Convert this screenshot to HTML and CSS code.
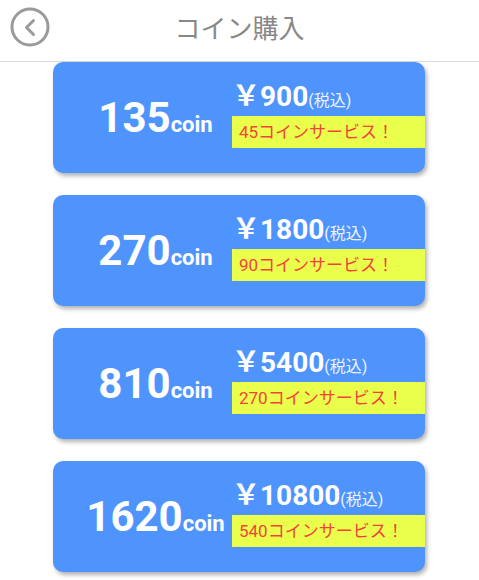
FILE: index.html
```html
<!DOCTYPE html>
<html lang="ja">
<head>
<meta charset="utf-8">
<title>コイン購入</title>
<link rel="stylesheet" href="styles.css">
</head>
<body>
<header class="header">
  <div class="back">
    <svg width="40" height="40" viewBox="0 0 40 40">
      <circle cx="20" cy="20" r="18" fill="none" stroke="#9a9a9a" stroke-width="3"/>
      <path d="M23.5 13.5 L16.5 20.5 L23.5 27.5" fill="none" stroke="#9a9a9a" stroke-width="3" stroke-linecap="round" stroke-linejoin="round"/>
    </svg>
  </div>
  <h1 class="title">コイン購入</h1>
  <div class="spacer"></div>
</header>
<main class="list">
  <div class="card">
    <div class="amount"><span class="num">135</span><span class="unit">coin</span></div>
    <div class="info">
      <div class="price"><span class="yen">￥</span>900<span class="tax">(税込)</span></div>
      <div class="bonus">45コインサービス！</div>
    </div>
  </div>
  <div class="card">
    <div class="amount"><span class="num">270</span><span class="unit">coin</span></div>
    <div class="info">
      <div class="price"><span class="yen">￥</span>1800<span class="tax">(税込)</span></div>
      <div class="bonus">90コインサービス！</div>
    </div>
  </div>
  <div class="card">
    <div class="amount"><span class="num">810</span><span class="unit">coin</span></div>
    <div class="info">
      <div class="price"><span class="yen">￥</span>5400<span class="tax">(税込)</span></div>
      <div class="bonus">270コインサービス！</div>
    </div>
  </div>
  <div class="card">
    <div class="amount"><span class="num">1620</span><span class="unit">coin</span></div>
    <div class="info">
      <div class="price"><span class="yen">￥</span>10800<span class="tax">(税込)</span></div>
      <div class="bonus">540コインサービス！</div>
    </div>
  </div>
</main>
</body>
</html>
```
FILE: styles.css
```css
* { box-sizing: border-box; }
html, body { margin: 0; padding: 0; background: #fff; }
body {
  font-family: Roboto, "Noto Sans CJK JP", sans-serif;
  width: 479px;
  height: 580px;
  overflow: hidden;
}
.header {
  height: 62px;
  border-bottom: 1px solid #dcdcdc;
  display: grid;
  grid-template-columns: 60px 1fr 60px;
  align-items: start;
}
.back {
  padding: 7px 0 0 10px;
  height: 61px;
}
.back svg { display: block; }
.title {
  margin: 0;
  padding-top: 10px;
  text-align: center;
  font-family: "Noto Sans CJK JP", sans-serif;
  font-weight: 400;
  font-size: 26px;
  line-height: 34px;
  color: #888888;
}
.list {
  display: flex;
  flex-direction: column;
  gap: 22px;
  padding: 0 54px 0 53px;
}
.card {
  height: 111px;
  background: #4f94fd;
  border-radius: 10px;
  box-shadow: 2px 3px 4px rgba(0, 0, 0, 0.3);
  display: flex;
  align-items: center;
  color: #fff;
}
.amount {
  width: 179px;
  padding-left: 26px;
  text-align: center;
  line-height: 1;
  font-weight: 700;
  white-space: nowrap;
}
.num { font-size: 42px; }
.unit { font-size: 22px; }
.info {
  flex: 1;
  align-self: flex-start;
  margin-top: 18px;
}
.price {
  height: 36px;
  line-height: 34px;
  font-size: 28px;
  font-weight: 700;
  white-space: nowrap;
}
.yen {
  font-family: "Noto Sans CJK JP", sans-serif;
  font-weight: 700;
  line-height: 1;
}
.tax {
  font-size: 16px;
  font-weight: 400;
  line-height: 1;
  color: #eef3ff;
}
.bonus {
  height: 32px;
  line-height: 32px;
  background: #eaff4c;
  color: #f4433a;
  font-size: 17px;
  padding-left: 7px;
  white-space: nowrap;
}
```
